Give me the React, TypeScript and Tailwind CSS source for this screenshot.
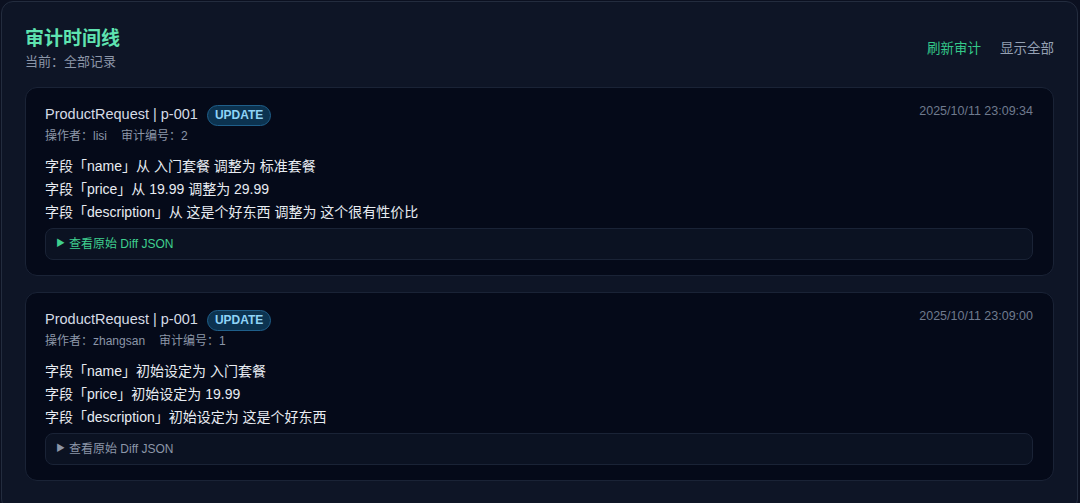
import React from 'react';

type Entry = {
  id: number;
  operator: string;
  time: string;
  lines: React.ReactNode[];
  active: boolean;
};

const entries: Entry[] = [
  {
    id: 2,
    operator: 'lisi',
    time: '2025/10/11 23:09:34',
    lines: [
      '字段「name」从 入门套餐 调整为 标准套餐',
      '字段「price」从 19.99 调整为 29.99',
      '字段「description」从 这是个好东西 调整为 这个很有性价比',
    ],
    active: true,
  },
  {
    id: 1,
    operator: 'zhangsan',
    time: '2025/10/11 23:09:00',
    lines: [
      '字段「name」初始设定为 入门套餐',
      '字段「price」初始设定为 19.99',
      '字段「description」初始设定为 这是个好东西',
    ],
    active: false,
  },
];

const AuditCard: React.FC<{ entry: Entry }> = ({ entry }) => (
  <div className="rounded-xl border border-[#1a2336] bg-[#050a19] pl-[19px] pr-[20px] pt-4 pb-[15px]">
    <div className="flex items-start justify-between">
      <div>
        <div className="flex items-center gap-[9px] h-[22px]">
          <span className="text-[14.5px] text-[#d5dbe5]">ProductRequest | p-001</span>
          <span className="h-[21px] flex items-center rounded-full border border-[#1f5f8a] bg-[#0c3350] px-[7px] text-[12px] font-bold text-[#8fd3f7]">
            UPDATE
          </span>
        </div>
        <div className="mt-[2px] h-[16px] flex items-center gap-[14px] text-[12px] text-[#8c96a8]">
          <span>操作者：{entry.operator}</span>
          <span>审计编号：{entry.id}</span>
        </div>
      </div>
      <span className="mt-[-2px] text-[12.5px] text-[#6f7a8e]">{entry.time}</span>
    </div>
    <div className="mt-[11px] text-[14px] leading-[23px] text-[#e8ecf2]">
      {entry.lines.map((l, i) => (
        <div key={i}>{l}</div>
      ))}
    </div>
    <div
      className={`mt-[4px] h-[32px] flex items-center rounded-lg border border-[#1a2336] bg-[#0b1222] px-[10px] text-[12px] ${
        entry.active ? 'text-[#3fcf8e]' : 'text-[#8c96a8]'
      }`}
    >
      <span className="mr-[4px] text-[9px]">▶</span>
      查看原始 Diff JSON
    </div>
  </div>
);

export default function App() {
  return (
    <div
      className="h-[503px] overflow-hidden bg-[#0b1020] pt-[1px] pl-[1px]"
      style={{ fontFamily: '"Liberation Sans", "Noto Sans CJK SC", sans-serif' }}
    >
      <div className="w-[1077px] h-[510px] rounded-xl border border-[#232c3e] bg-[#0e1526] px-[23px] pt-[23px]">
        <div className="flex items-center justify-between">
          <div>
            <h1 className="text-[19px] leading-[28px] font-bold text-[#5fe3b0]">审计时间线</h1>
            <p className="text-[13px] leading-[18px] text-[#8c96a8]">当前：全部记录</p>
          </div>
          <div className="mt-[3px] flex items-center gap-[19px] text-[13.5px]">
            <button className="text-[#34c98a]">刷新审计</button>
            <button className="text-[#94a0b3]">显示全部</button>
          </div>
        </div>
        <div className="mt-[16px] flex flex-col gap-[16px]">
          {entries.map((e) => (
            <AuditCard key={e.id} entry={e} />
          ))}
        </div>
      </div>
    </div>
  );
}
